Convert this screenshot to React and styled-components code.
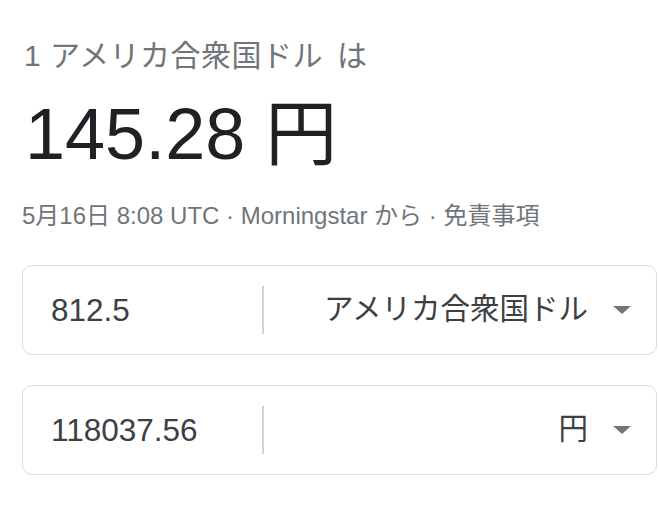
import React from "react";
import styled, { createGlobalStyle } from "styled-components";

const GlobalStyle = createGlobalStyle`
  body {
    margin: 0;
    background: #ffffff;
    font-family: "Liberation Sans", "Noto Sans CJK JP", sans-serif;
  }
`;

const Page = styled.div`
  width: 659px;
  height: 508px;
  box-sizing: border-box;
  padding: 38px 2px 0 22px;
  overflow: hidden;
`;

const Heading = styled.div`
  font-size: 30px;
  line-height: 36px;
  color: #70757a;
  padding-left: 2px;
  letter-spacing: 0.5px;
`;

const Particle = styled.span`
  margin-left: 14px;
`;

const Rate = styled.div`
  font-size: 72px;
  line-height: 84px;
  color: #202124;
  margin-top: 18px;
  padding-left: 3px;
`;

const Meta = styled.div`
  font-size: 24px;
  line-height: 28px;
  color: #70757a;
  margin-top: 26px;
`;

const Converter = styled.div`
  display: flex;
  flex-direction: column;
  gap: 30px;
  margin-top: 35px;
`;

const Row = styled.div`
  display: flex;
  align-items: center;
  height: 90px;
  box-sizing: border-box;
  border: 1px solid #dadce0;
  border-radius: 10px;
`;

const Amount = styled.div`
  width: 211px;
  padding-left: 28px;
  font-size: 31.5px;
  color: #3c4043;
`;

const Divider = styled.div`
  width: 2px;
  height: 48px;
  background: #d4d4d4;
`;

const Select = styled.div`
  flex: 1;
  display: flex;
  align-items: center;
  justify-content: flex-end;
  gap: 24px;
  padding-right: 24px;
  font-size: 29.5px;
  color: #3c4043;
`;

const CurrencyName = styled.span`
  margin-top: -9px;
`;

const Caret = () => (
  <svg width="20" height="10" viewBox="0 0 20 10">
    <path d="M1 1h18l-9 8z" fill="#757575" />
  </svg>
);

const CurrencyRow = ({ amount, currency }) => (
  <Row>
    <Amount>{amount}</Amount>
    <Divider />
    <Select>
      <CurrencyName>{currency}</CurrencyName>
      <Caret />
    </Select>
  </Row>
);

export default function App() {
  return (
    <>
      <GlobalStyle />
      <Page>
        <Heading>
          1 アメリカ合衆国ドル<Particle>は</Particle>
        </Heading>
        <Rate>145.28 円</Rate>
        <Meta>5月16日 8:08 UTC · Morningstar から · 免責事項</Meta>
        <Converter>
          <CurrencyRow amount="812.5" currency="アメリカ合衆国ドル" />
          <CurrencyRow amount="118037.56" currency="円" />
        </Converter>
      </Page>
    </>
  );
}
